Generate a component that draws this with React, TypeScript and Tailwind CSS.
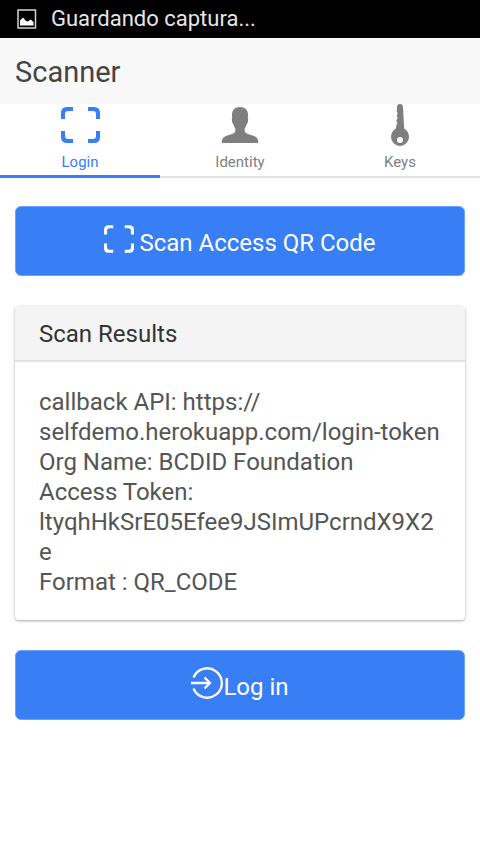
import type { ReactNode } from "react";

function ScanIcon({ className }: { className: string }) {
  return (
    <svg viewBox="0 0 39 36" fill="currentColor" className={className} aria-hidden="true">
      <path d="M0 12V6Q0 0 6 0H12V4H7Q4 4 4 7V12Z" />
      <path d="M39 12V6Q39 0 33 0H27V4H32Q35 4 35 7V12Z" />
      <path d="M0 24V30Q0 36 6 36H12V32H7Q4 32 4 29V24Z" />
      <path d="M39 24V30Q39 36 33 36H27V32H32Q35 32 35 29V24Z" />
    </svg>
  );
}

function PersonIcon() {
  return (
    <svg viewBox="0 0 36 36" fill="currentColor" className="h-9 w-9" aria-hidden="true">
      <path d="M18 0C23 0 26 3 26 7.500Q26 9.500 25.800 11Q26.500 11.500 26 14Q25.700 16.500 24.800 17Q24.300 19.500 22.700 21.500V24.500C23.500 27 28 27.300 32 29Q36 30.700 36 33.500V36H0V33.500Q0 30.700 4 29C8 27.300 12.500 27 13.300 24.500V21.500Q11.700 19.500 11.200 17Q10.300 16.500 10 14Q9.500 11.500 10.200 11Q10 9.500 10 7.500C10 3 13 0 18 0Z" />
    </svg>
  );
}

function KeyIcon() {
  return (
    <svg viewBox="0 0 18 42" fill="currentColor" className="h-[42px] w-[18px]" aria-hidden="true">
      <path
        fillRule="evenodd"
        d="M6 3Q6 0 9 0Q11.800 0 12 3L13.200 24.500Q18 27.500 18 33A9 9 0 0 1 0 33Q0 27.500 4.800 24.500L5.600 20.500L6.400 19.500L5.600 18V15.500L6.800 14L5.800 12.500V11L6.800 9.500L5.800 8ZM9 33A3 3 0 1 0 9 39A3 3 0 1 0 9 33Z"
      />
    </svg>
  );
}

function LoginIcon() {
  return (
    <svg
      viewBox="0 0 32 32"
      fill="none"
      stroke="currentColor"
      strokeWidth="2.300"
      className="h-8 w-8"
      aria-hidden="true"
    >
      <path d="M2.500 10.500A14.700 14.700 0 1 1 2.500 21.500" />
      <path d="M0 16H19M13.500 10.500L19 16L13.500 21.500" />
    </svg>
  );
}

function PictureIcon() {
  return (
    <svg viewBox="0 0 20 20" className="h-5 w-5" aria-hidden="true">
      <rect x="1" y="1" width="17.500" height="18" fill="none" stroke="#d4d4d4" strokeWidth="1.500" />
      <path d="M3 16.500V11.500L6 8.500L9 12L11 12.500L13.500 10.500L16.500 13V16.500Z" fill="#fff" />
    </svg>
  );
}

function Tab({ label, active, children }: { label: string; active?: boolean; children: ReactNode }) {
  return (
    <button
      type="button"
      role="tab"
      aria-selected={!!active}
      className={
        active
          ? "flex flex-1 flex-col items-center border-b-3 border-[#387ef5] text-[#387ef5]"
          : "flex flex-1 flex-col items-center border-b-2 border-[#e4e4e4] text-[#7f7f7f]"
      }
    >
      <span className="flex h-[42px] items-center">{children}</span>
      <span className="mt-1 text-[15px] leading-6">{label}</span>
    </button>
  );
}

function ActionButton({ children }: { children: ReactNode }) {
  return (
    <button
      type="button"
      className="flex h-[70px] w-full items-center justify-center rounded-md border border-[#6ea2f8] bg-[#387ef5] text-2xl text-white"
    >
      {children}
    </button>
  );
}

export default function App() {
  return (
    <div className="min-h-screen bg-white font-['Roboto',sans-serif] text-[#555]">
      <div className="flex h-[38px] items-center gap-3.5 bg-black pb-px pl-[17px] text-[22px] text-[#e6e6e6]">
        <PictureIcon />
        <span>Guardando captura...</span>
      </div>
      <header className="flex h-[66px] items-center bg-[#f8f8f8] px-[15px] pt-1">
        <h1 className="text-[29px] text-[#444]">Scanner</h1>
      </header>
      <div role="tablist" className="flex h-[74px]">
        <Tab label="Login" active>
          <ScanIcon className="h-9 w-[39px]" />
        </Tab>
        <Tab label="Identity">
          <PersonIcon />
        </Tab>
        <Tab label="Keys">
          <KeyIcon />
        </Tab>
      </div>
      <main className="flex flex-col gap-[30px] px-[15px] py-7">
        <ActionButton>
          <ScanIcon className="mr-[5px] mb-1 h-7 w-[30px]" />
          <span className="pt-1">Scan Access QR Code</span>
        </ActionButton>
        <section className="overflow-hidden rounded-sm bg-white shadow-[0_1px_3px_rgba(0,0,0,0.35)]">
          <h2 className="border-b-2 border-[#e2e2e2] bg-[#f4f4f4] px-6 pt-[13px] pb-[11px] text-2xl leading-[30px] text-[#333]">
            Scan Results
          </h2>
          <div className="px-6 pt-[25px] pb-[23px] text-2xl leading-[30px] wrap-break-word">
            <p>
              callback API: https://
              <br />
              selfdemo.herokuapp.com/login-token
            </p>
            <p>Org Name: BCDID Foundation</p>
            <p>Access Token: ltyqhHkSrE05Efee9JSImUPcrndX9X2e</p>
            <p>Format : QR_CODE</p>
          </div>
        </section>
        <ActionButton>
          <span className="mb-1">
            <LoginIcon />
          </span>
          <span className="pt-1">Log in</span>
        </ActionButton>
      </main>
    </div>
  );
}
